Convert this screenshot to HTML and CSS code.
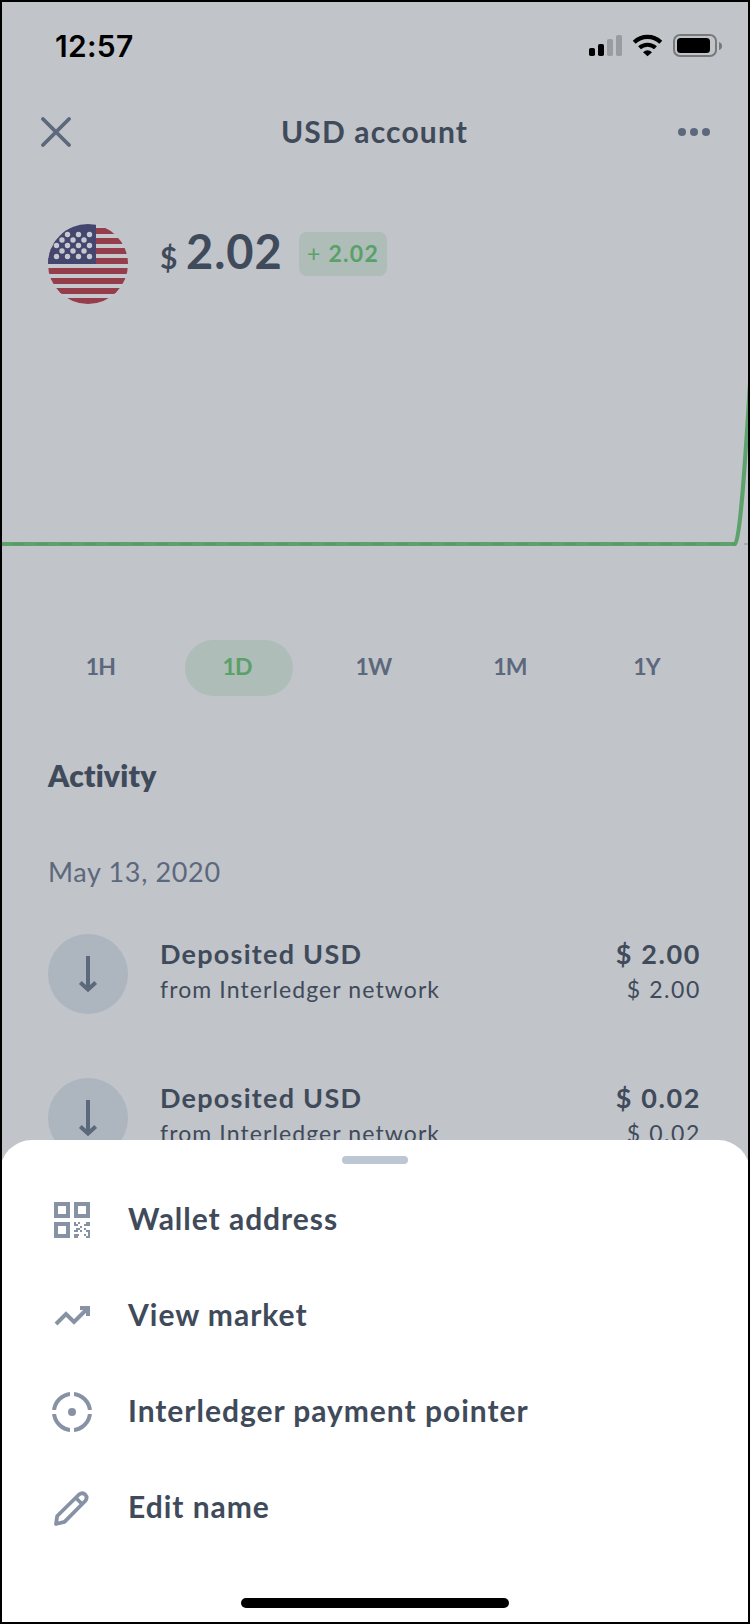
FILE: index.html
```html
<!DOCTYPE html>
<html lang="en">
<head>
<meta charset="utf-8">
<title>USD account</title>
<link rel="stylesheet" href="styles.css">
</head>
<body>
<div class="screen">
  <main class="account">
    <div class="status">
      <span class="time">12:57</span>
      <svg class="status-icons" width="134" height="24" viewBox="0 0 134 24">
        <rect x="0" y="14" width="6" height="8" rx="1.8"/>
        <rect x="9" y="10" width="6" height="12" rx="1.8"/>
        <g fill="#999ca0"><rect x="18" y="5" width="6" height="17" rx="1.8"/><rect x="27" y="1" width="6" height="21" rx="1.8"/></g>
        <g fill="none" stroke="#000" stroke-width="4.2"><path d="M45.200 8.200a19.500 19.500 0 0 1 26.600 0"/><path d="M50.500 13.800a12 12 0 0 1 16 0"/></g>
        <path d="M54 18.200q4.500-3.700 9 0L58.500 22.200z"/>
        <rect x="85" y="1" width="42" height="21" rx="6" fill="none" stroke="#77797c" stroke-width="2"/>
        <rect x="88" y="4" width="33" height="15" rx="3.500"/>
        <path d="M130 8q3 1 3 4t-3 4z" fill="#77797c"/>
      </svg>
    </div>
    <header class="nav">
      <svg width="30" height="30" viewBox="0 0 30 30"><path d="M2 2L28 28M28 2L2 28" stroke="#5c687c" stroke-width="3.800" stroke-linecap="round"/></svg>
      <h1 class="title">USD account</h1>
      <svg width="32" height="8" viewBox="0 0 32 8" fill="#5c687c"><circle cx="4" cy="4" r="4"/><circle cx="16" cy="4" r="4"/><circle cx="28" cy="4" r="4"/></svg>
    </header>
    <section class="balance">
      <svg class="flag" width="80" height="80" viewBox="0 0 80 80">
        <clipPath id="disc"><circle cx="40" cy="40" r="40"/></clipPath>
        <g clip-path="url(#disc)">
          <path fill="#c5c8cd" d="M0 0h80v80H0z"/>
          <path stroke="#943d4b" stroke-width="6" d="M0 7h80M0 17h80M0 27h80M0 37h80M0 47h80M0 57h80M0 67h80M0 77h80"/>
          <path fill="#44466f" d="M0 0h48v40H0z"/>
          <g stroke="#c5c8cd" stroke-width="5.400" stroke-linecap="round" stroke-dasharray="0 11">
            <path d="M19.500 10.500h23M14 16h23M8.500 21.500h34M14 27h23M8.500 32.500h34"/>
          </g>
        </g>
      </svg>
      <div class="amount"><span class="currency">$</span><span class="value">2.02</span></div>
      <div class="change"><span class="plus">+</span> 2.02</div>
    </section>
    <svg class="chart" width="746" height="250" viewBox="0 0 746 250" fill="none">
      <path d="M0 212H733C739 206 744 115 748 50" stroke="#5da26b" stroke-width="4" stroke-linejoin="round"/>
      <path d="M10 212H733" stroke="#5c966c" stroke-width="2" stroke-dasharray="12 12"/>
      <path d="M742 212h4" stroke="#a5acb6" stroke-width="2"/>
    </svg>
    <div class="ranges">
      <span class="range">1H</span><span class="range active">1D</span><span class="range">1W</span><span class="range">1M</span><span class="range">1Y</span>
    </div>
    <h2 class="heading">Activity</h2>
    <p class="date">May 13, 2020</p>
    <div class="entry">
      <div class="badge"><svg width="20" height="38" viewBox="0 0 20 38" fill="none" stroke="#5c687c" stroke-width="4"><path d="M10 1v34M2.300 27.500L10 34.500l7.700-7"/></svg></div>
      <div class="details"><div class="name">Deposited USD</div><div class="source">from Interledger network</div></div>
      <div class="sums"><div class="sum">$ 2.00</div><div class="sub">$ 2.00</div></div>
    </div>
    <div class="entry">
      <div class="badge"><svg width="20" height="38" viewBox="0 0 20 38" fill="none" stroke="#5c687c" stroke-width="4"><path d="M10 1v34M2.300 27.500L10 34.500l7.700-7"/></svg></div>
      <div class="details"><div class="name">Deposited USD</div><div class="source">from Interledger network</div></div>
      <div class="sums"><div class="sum">$ 0.02</div><div class="sub">$ 0.02</div></div>
    </div>
  </main>
  <div class="sheet">
    <div class="grabber"></div>
    <ul class="menu">
      <li class="item">
        <svg width="40" height="40" viewBox="0 0 40 40" fill="#8793a5"><path fill-rule="evenodd" d="M2 2h16v16H2zM6 6v8h8V6zM22 2h16v16H22zM26 6v8h8V6zM2 22h16v16H2zM6 26v8h8v-8z"/><path d="M22 22h2v2h-2zM26 22h2v2h-2zM22 24h4v2h-4zM34 22h4v4h-6v-2h2zM28 26h2v2h-2zM24 28h4v2h-4zM22 30h4v2h-4zM28 30h2v2h-2zM32 28h2v2h-2zM34 30h4v8h-2v-6h-2zM32 34h2v2h-2zM34 36h2v2h-2zM22 34h5v2h-1v2h-4z"/></svg>
        <span class="label">Wallet address</span>
      </li>
      <li class="item">
        <svg width="40" height="40" viewBox="0 0 40 40"><path d="M4 28L14 18l8 8L35 13" fill="none" stroke="#8793a5" stroke-width="4"/><path d="M28 10h10v10h-4v-6h-6z" fill="#8793a5"/></svg>
        <span class="label">View market</span>
      </li>
      <li class="item">
        <svg width="40" height="40" viewBox="0 0 40 40"><circle cx="20" cy="20" r="18" fill="none" stroke="#8793a5" stroke-width="4"/><path d="M20-1v42M-1 20h42" stroke="#fff" stroke-width="4"/><circle cx="20" cy="20" r="4" fill="#8793a5"/></svg>
        <span class="label">Interledger payment pointer</span>
      </li>
      <li class="item">
        <svg width="40" height="40" viewBox="0 0 40 40" fill="none" stroke="#8793a5" stroke-width="3.800" stroke-linejoin="round"><path d="M4 36L5.200 28L27 6.500Q30.500 4 33.300 6.700Q36 9.500 33.200 13L12.500 33.800zM24 10l6 6"/></svg>
        <span class="label">Edit name</span>
      </li>
    </ul>
    <div class="home"></div>
  </div>
</div>
</body>
</html>
```

FILE: styles.css
```css
* { box-sizing: border-box; }
body { margin: 0; }
.screen {
  position: relative;
  width: 750px;
  height: 1624px;
  overflow: hidden;
  border: 2px solid #000;
  background: #c1c4c9;
  color: #3f4a5a;
  font-family: Lato, "Open Sans", sans-serif;
  font-variant-ligatures: none;
}
.account { display: flex; flex-direction: column; }
.status {
  display: flex;
  justify-content: space-between;
  align-items: center;
  height: 86px;
  padding: 2px 25px 0 53px;
  color: #000;
}
.time { font: 600 30px/40px Inter, sans-serif; letter-spacing: 0.3px; }
.nav {
  display: flex;
  justify-content: space-between;
  align-items: center;
  height: 88px;
  padding: 0 38px 0 39px;
}
.title { margin: 0; padding-bottom: 3px; font-size: 30px; font-weight: 700; line-height: 40px; letter-spacing: 1.15px; }
.balance { display: flex; align-items: flex-start; padding: 48px 46px 0; height: 170px; }
.amount { display: flex; align-items: baseline; margin: -1px 0 0 32px; line-height: 56px; }
.currency { font-size: 30px; font-weight: 700; width: 26px; }
.value { font-size: 47px; font-weight: 700; letter-spacing: 0.9px; width: 96px; }
.change {
  width: 88px;
  height: 44px;
  margin: 8px 0 0 17px;
  border-radius: 8px;
  background: #aebdb8;
  color: #59a069;
  font-size: 23px;
  font-weight: 700;
  line-height: 43px;
  text-align: center;
  letter-spacing: 1.3px;
}
.plus { font-weight: 400; }
.chart { display: block; margin-top: -14px; }
.ranges { display: grid; grid-template-columns: repeat(5, 108px); column-gap: 28.5px; justify-content: center; padding-top: 58px; }
.range { height: 56px; padding-right: 3px; border-radius: 28px; color: #5c687c; font-size: 23px; font-weight: 700; line-height: 53px; text-align: center; letter-spacing: -0.8px; }
.active { background: #aebdb8; color: #59a069; }
.heading { margin: 59px 0 0 46px; font-size: 30px; font-weight: 800; line-height: 40px; letter-spacing: 0.2px; }
.date { margin: 57px 0 0 46px; color: #5c687c; font-size: 27px; line-height: 40px; letter-spacing: 0.65px; }
.entry { display: flex; height: 80px; margin: 42px 47px 22px 46px; }
.badge { display: flex; justify-content: center; align-items: center; width: 80px; height: 80px; border-radius: 50%; background: #adb5bf; }
.details { margin-left: 32px; }
.name, .sum { font-size: 27px; font-weight: 700; line-height: 39px; letter-spacing: 1.25px; }
.source, .sub { font-size: 23px; line-height: 32px; letter-spacing: 1.1px; }
.sums { margin-left: auto; text-align: right; }
.sum, .sub { letter-spacing: 1.6px; }
.sheet {
  position: absolute;
  inset: 1138px -2px 0;
  display: flex;
  flex-direction: column;
  align-items: center;
  border-radius: 32px 32px 0 0;
  background: #fff;
}
.grabber { width: 66px; height: 8px; margin-top: 16px; border-radius: 4px; background: #bcc7d3; }
.menu { align-self: stretch; margin: 8px 0 0; padding: 0 52px; list-style: none; }
.item { display: flex; align-items: center; gap: 36px; height: 96px; }
.label { padding-bottom: 4px; font-size: 30px; font-weight: 700; line-height: 40px; letter-spacing: 0.97px; }
.home { width: 268px; height: 10px; margin-top: auto; margin-bottom: 14px; border-radius: 5px; background: #000; }
```
